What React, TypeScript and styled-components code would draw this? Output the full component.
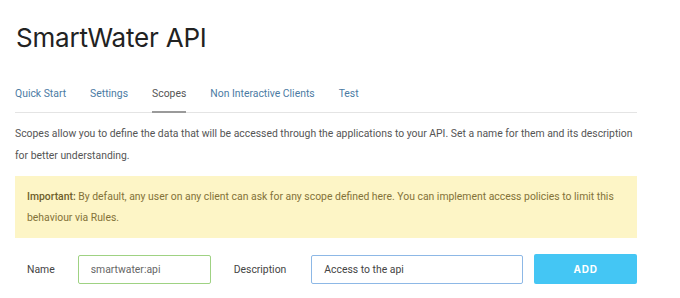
import styled, { createGlobalStyle } from 'styled-components';

const tabs = ['Quick Start', 'Settings', 'Scopes', 'Non Interactive Clients', 'Test'];

const App = () => {
  return (
    <Page>
      <GlobalStyle />
      <Title>SmartWater API</Title>
      <TabBar>
        {tabs.map((tab) => (
          <Tab key={tab} active={tab === 'Scopes'}>
            {tab}
          </Tab>
        ))}
      </TabBar>
      <Intro>
        Scopes allow you to define the data that will be accessed through the applications to your
        API. Set a name for them and its description for better understanding.
      </Intro>
      <Notice>
        <strong>Important:</strong> By default, any user on any client can ask for any scope defined
        here. You can implement access policies to limit this behaviour via Rules.
      </Notice>
      <FormRow>
        <Label>Name</Label>
        <NameInput defaultValue="smartwater:api" />
        <Label gap={25}>Description</Label>
        <DescriptionInput defaultValue="Access to the api" spellCheck={false} />
        <AddButton>ADD</AddButton>
      </FormRow>
    </Page>
  );
};

const GlobalStyle = createGlobalStyle`
  body {
    margin: 0;
    background: #fff;
    font-family: Roboto, "Noto Sans", sans-serif;
  }
`;

const Page = styled.div`
  width: 622px;
  padding: 22px 0 0 15px;
`;

const Title = styled.h1`
  margin: 0 0 0 1px;
  font-family: Inter, "Noto Sans", sans-serif;
  font-size: 26px;
  font-weight: 400;
  letter-spacing: -0.2px;
  color: #222;
  line-height: 32px;
`;

const TabBar = styled.div`
  display: flex;
  gap: 24px;
  margin-top: 30px;
  border-bottom: 1px solid #e4e4e4;
`;

const Tab = styled.div<{ active?: boolean }>`
  font-size: 10.4px;
  line-height: 14px;
  padding: 3px 0 10px;
  color: ${({ active }) => (active ? '#555' : '#4b7ba3')};
  border-bottom: 2px solid ${({ active }) => (active ? '#9a9a9a' : 'transparent')};
  margin-bottom: -1px;
`;

const Intro = styled.p`
  margin: 10px 0 0;
  font-size: 10.4px;
  line-height: 22px;
  color: #555;
`;

const Notice = styled.div`
  margin-top: 9px;
  padding: 10px 12px;
  background: #fdf5c6;
  font-size: 10.4px;
  line-height: 21px;
  color: #837238;
  strong {
    font-weight: 500;
    color: #6e5e2a;
  }
`;

const FormRow = styled.div`
  display: flex;
  align-items: center;
  margin-top: 16px;
  padding-left: 12px;
`;

const Label = styled.label<{ gap?: number }>`
  font-size: 10.4px;
  color: #444;
  margin-right: ${({ gap }) => gap ?? 23}px;
`;

const Field = styled.input`
  height: 29px;
  box-sizing: border-box;
  border-radius: 2px;
  font-family: Roboto, "Noto Sans", sans-serif;
  font-size: 10.4px;
  padding: 0 12px;
  outline: none;
  margin-right: 23px;
`;

const NameInput = styled(Field)`
  width: 133px;
  border: 1px solid #9fd283;
  color: #666;
`;

const DescriptionInput = styled(Field)`
  width: 212px;
  border: 1px solid #8db8e6;
  color: #444;
  margin-right: 11px;
`;

const AddButton = styled.button`
  width: 103px;
  height: 30px;
  border: none;
  border-radius: 2px;
  background: #44c6f4;
  color: #fff;
  font-family: Inter, "Noto Sans", sans-serif;
  font-weight: 700;
  font-size: 10px;
  letter-spacing: 0.8px;
`;

export default App;
